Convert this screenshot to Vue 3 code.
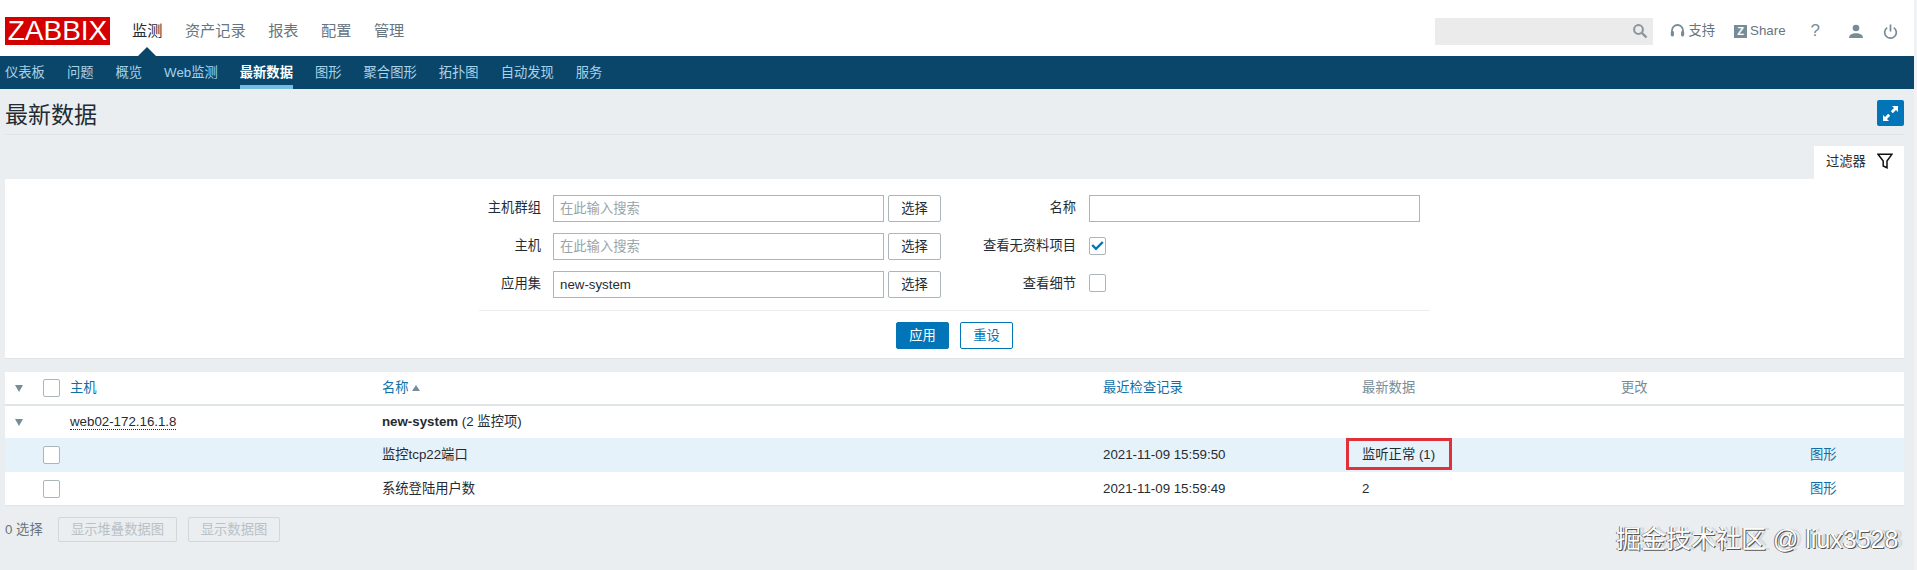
<script setup>
const topMenu = ['监测', '资产记录', '报表', '配置', '管理']
const subMenu = ['仪表板', '问题', '概览', 'Web监测', '最新数据', '图形', '聚合图形', '拓扑图', '自动发现', '服务']
</script>

<template>
  <div class="page">
    <header class="topbar">
      <div class="logo">ZABBIX</div>
      <nav class="menu">
        <a v-for="(m, i) in topMenu" :key="m" class="menu-item" :class="{ on: i === 0 }">{{ m }}</a>
      </nav>
      <div class="tools">
        <div class="search">
          <svg width="16" height="16" viewBox="0 0 16 16" class="search-icon"><circle cx="6.5" cy="6.5" r="4.4" fill="none" stroke="#8a9499" stroke-width="2"/><path d="M10 10l4.5 4.5" stroke="#8a9499" stroke-width="2.4"/></svg>
        </div>
        <a class="tool support">
          <svg width="15" height="16" viewBox="0 0 15 16"><path d="M2 10V7.5a5.5 5.5 0 0 1 11 0V10" fill="none" stroke="#768d99" stroke-width="1.8"/><rect x="0.8" y="8" width="3.2" height="5.5" rx="1.4" fill="#768d99"/><rect x="11" y="8" width="3.2" height="5.5" rx="1.4" fill="#768d99"/></svg>
          <span>支持</span>
        </a>
        <a class="tool share"><span class="z">Z</span><span>Share</span></a>
        <a class="tool help">?</a>
        <a class="tool user">
          <svg width="16" height="15" viewBox="0 0 16 15"><circle cx="8" cy="4" r="3.3" fill="#768d99"/><path d="M1 14c0-3.2 2.8-4.8 7-4.8s7 1.6 7 4.8z" fill="#768d99"/></svg>
        </a>
        <a class="tool power">
          <svg width="15" height="15" viewBox="0 0 15 15"><path d="M4.2 3.6a5.8 5.8 0 1 0 6.6 0" fill="none" stroke="#768d99" stroke-width="1.7"/><path d="M7.5 0.5v7" stroke="#768d99" stroke-width="1.7"/></svg>
        </a>
      </div>
    </header>

    <nav class="subnav">
      <a v-for="(m, i) in subMenu" :key="m" class="sub-item" :class="{ on: i === 4 }">{{ m }}</a>
    </nav>

    <main class="content">
      <div class="head">
        <h1>最新数据</h1>
        <button class="expand" aria-label="全屏">
          <svg width="17" height="17" viewBox="0 0 17 17"><path d="M10 1h6v6l-2-2-3.2 3.2-2-2L12 3z M7 16H1v-6l2 2 3.2-3.2 2 2L5 14z" fill="#fff"/></svg>
        </button>
      </div>

      <div class="filter-tabs">
        <div class="filter-tab">
          <span>过滤器</span>
          <svg width="16" height="16" viewBox="0 0 16 16"><path d="M1 1.2h14L10 8v6.8L6.2 13V8z" fill="#fff" stroke="#111" stroke-width="1.5" stroke-linejoin="miter"/></svg>
        </div>
      </div>

      <section class="filter">
        <div class="form">
          <div class="form-row">
            <label class="lab1">主机群组</label>
            <div class="field ph">在此输入搜索</div>
            <button class="pick">选择</button>
            <label class="lab2">名称</label>
            <div class="field wide"></div>
          </div>
          <div class="form-row">
            <label class="lab1">主机</label>
            <div class="field ph">在此输入搜索</div>
            <button class="pick">选择</button>
            <label class="lab2">查看无资料项目</label>
            <span class="check lift">
              <svg width="13" height="11" viewBox="0 0 13 11"><path d="M1.2 5l3.8 3.8L11.8 2" fill="none" stroke="#0275b8" stroke-width="2.4"/></svg>
            </span>
          </div>
          <div class="form-row">
            <label class="lab1">应用集</label>
            <div class="field">new-system</div>
            <button class="pick">选择</button>
            <label class="lab2">查看细节</label>
            <span class="check lift2"></span>
          </div>
          <div class="actions">
            <button class="apply">应用</button>
            <button class="reset">重设</button>
          </div>
        </div>
      </section>

      <section class="table">
        <div class="row thead">
          <span class="tri"></span>
          <span class="check"></span>
          <a class="link">主机</a>
          <a class="link sort">名称<i class="up"></i></a>
          <a class="link">最近检查记录</a>
          <span class="muted">最新数据</span>
          <span class="muted">更改</span>
          <span></span>
        </div>
        <div class="row r1">
          <span class="tri"></span>
          <span></span>
          <span><span class="dotted">web02-172.16.1.8</span></span>
          <span><b>new-system</b> <span class="dim">(2 监控项)</span></span>
          <span></span><span></span><span></span><span></span>
        </div>
        <div class="row r2">
          <span></span>
          <span class="check"></span>
          <span></span>
          <span>监控tcp22端口</span>
          <span>2021-11-09 15:59:50</span>
          <span class="boxed">监听正常 (1)</span>
          <span></span>
          <a class="link">图形</a>
        </div>
        <div class="row r3">
          <span></span>
          <span class="check"></span>
          <span></span>
          <span>系统登陆用户数</span>
          <span>2021-11-09 15:59:49</span>
          <span>2</span>
          <span></span>
          <a class="link">图形</a>
        </div>
      </section>

      <footer class="foot">
        <span class="count">0 选择</span>
        <button class="off">显示堆叠数据图</button>
        <button class="off">显示数据图</button>
      </footer>
    </main>

    <div class="watermark">掘金技术社区 @ liux3528</div>
  </div>
</template>

<style>
html, body { margin: 0; background: #f0f2f3; }
</style>

<style scoped>
.page {
  position: relative;
  width: 1914px;
  height: 570px;
  overflow: hidden;
  background: #ebeef0;
  color: #1f2c33;
  font: 13.3px/16px "Liberation Sans", "Noto Sans CJK SC", sans-serif;
}
a { text-decoration: none; }
button { font: inherit; margin: 0; padding: 0; cursor: pointer; }

.topbar {
  box-sizing: border-box;
  height: 56px;
  padding: 6px 0 0 5px;
  display: flex;
  align-items: center;
  background: #fff;
}
.logo {
  width: 105px;
  height: 28px;
  background: #d40000;
  color: #fff;
  font: 28px/28px "Liberation Sans", sans-serif;
  text-align: center;
}
.menu { display: flex; gap: 22.5px; margin-left: 22px; }
.menu-item { position: relative; font-size: 15.2px; color: #66757f; }
.menu-item.on { color: #1f2c33; }
.menu-item.on::after {
  content: "";
  position: absolute;
  left: 50%;
  top: 24px;
  margin-left: -9px;
  border-left: 9px solid transparent;
  border-right: 9px solid transparent;
  border-bottom: 9px solid #0a466a;
}
.tools { display: flex; align-items: center; margin-left: auto; padding-right: 16px; color: #768d99; }
.search {
  width: 218px;
  height: 27px;
  background: #ebebeb;
  display: flex;
  align-items: center;
  justify-content: flex-end;
  padding-right: 5px;
  box-sizing: border-box;
}
.tool { display: flex; align-items: center; color: #66757f; }
.support { margin-left: 17px; gap: 3px; }
.share { margin-left: 19px; gap: 3px; }
.z {
  width: 13px; height: 13px;
  background: #768d99; color: #fff;
  font: bold 11px/13px "Liberation Sans", sans-serif;
  text-align: center;
}
.help { margin-left: 25px; font-size: 17px; color: #768d99; }
.user { margin-left: 28px; }
.power { margin-left: 19px; }

.subnav {
  box-sizing: border-box;
  height: 33px;
  padding-left: 5px;
  display: flex;
  gap: 22px;
  background: #0a466a;
}
.sub-item {
  color: #a8d2e8;
  line-height: 33px;
  height: 33px;
  box-sizing: border-box;
}
.sub-item.on {
  color: #fff;
  font-weight: 600;
  border-bottom: 4px solid #76bde2;
}

.content { padding: 0 10px 0 5px; }
.head {
  box-sizing: border-box;
  height: 46px;
  padding-top: 11px;
  display: flex;
  justify-content: space-between;
  align-items: flex-start;
  border-bottom: 1px solid #dfe4e7;
}
h1 { margin: 0; font-size: 23px; line-height: 30px; font-weight: 400; }
.expand {
  width: 27px; height: 26px;
  border: 0; border-radius: 2px;
  background: #0275b8;
  display: flex; align-items: center; justify-content: center;
}
.filter-tabs { display: flex; justify-content: flex-end; margin-top: 11px; }
.filter-tab {
  box-sizing: border-box;
  width: 90px; height: 33px;
  padding: 4px 11px 0 12px;
  display: flex;
  justify-content: space-between;
  background: #fff;
}
.filter-tab span { line-height: 24px; }
.filter-tab svg { margin-top: 3px; }

.filter {
  box-sizing: border-box;
  height: 180px;
  padding-top: 16px;
  background: #fff;
  border-bottom: 1px solid #dfe4e7;
  display: flex;
  justify-content: center;
}
.form { width: 951px; display: flex; flex-direction: column; gap: 11px; }
.form-row { display: flex; align-items: center; height: 27px; }
.lab1 { width: 62px; text-align: right; margin-right: 12px; padding-bottom: 2px; }
.lab2 { width: 134px; text-align: right; margin-right: 13px; margin-left: 1px; white-space: nowrap; padding-bottom: 2px; }
.field {
  box-sizing: border-box;
  width: 331px; height: 27px;
  padding: 0 6px;
  border: 1px solid #acb5ba;
  line-height: 25px;
  background: #fff;
}
.field.ph { color: #9aa3a8; }
.pick {
  box-sizing: border-box;
  width: 53px; height: 27px;
  margin-left: 4px;
  background: #fff;
  border: 1px solid #acb5ba;
  border-radius: 2px;
  color: #1f2c33;
}
.check {
  box-sizing: border-box;
  display: flex; align-items: center; justify-content: center;
  width: 17px; height: 18px;
  background: #fff;
  border: 1px solid #acb5ba;
  border-radius: 2px;
}
.lift { margin-bottom: 2px; }
.lift2 { margin-bottom: 4px; }
.actions {
  display: flex;
  justify-content: center;
  gap: 11px;
  margin-top: 1px;
  padding-top: 11px;
  border-top: 1px solid #ebeef0;
}
.actions button { box-sizing: border-box; width: 53px; height: 27px; border-radius: 2px; }
.apply { background: #0275b8; border: 1px solid #0275b8; color: #fff; }
.reset { background: #fff; border: 1px solid #0275b8; color: #0275b8; }

.table {
  margin-top: 13px;
  background: #fff;
  border-bottom: 1px solid #dfe4e7;
}
.row {
  display: grid;
  grid-template-columns: 38px 27px 312px 721px 259px 259px 189px 93px;
  align-items: center;
}
.thead { height: 32px; border-bottom: 2px solid #dfe4e7; }
.r1 { height: 32px; }
.r2 { height: 34px; background: #e6f2fa; }
.r3 { height: 33px; }
.tri {
  width: 0; height: 0;
  margin-left: 10px;
  border-left: 4.5px solid transparent;
  border-right: 4.5px solid transparent;
  border-top: 7px solid #768d99;
}
.link { color: #0f70a8; }
.muted { color: #768d99; }
.sort { display: flex; align-items: center; gap: 3px; }
.up {
  border-left: 4px solid transparent;
  border-right: 4px solid transparent;
  border-bottom: 6px solid #768d99;
}
.dotted { border-bottom: 1px dotted #1f2c33; display: inline-block; line-height: 15px; }
.dim { color: #1f2c33; }
.boxed { position: relative; }
.boxed::after {
  content: "";
  position: absolute;
  left: -16px; top: -9px;
  width: 100px; height: 26px;
  border: 3px solid #e0303a;
}

.foot { display: flex; align-items: center; margin-top: 11px; height: 25px; gap: 11px; }
.count { color: #66757f; width: 42px; }
.off {
  box-sizing: border-box;
  width: 119px;
  height: 25px;
  padding: 0;
  background: #ebeef0;
  color: #b9c1c6;
  border: 1px solid #d2d7da;
  border-radius: 2px;
}
.off + .off { width: 92px; }
.watermark {
  position: absolute;
  left: 1616px;
  top: 525px;
  font-size: 25px;
  line-height: 28px;
  white-space: nowrap;
  color: #fff;
  text-shadow: 1px 1px 0 #555, -1px 0 0 #777, 5px 0 1px #d4d8da;
}
</style>
